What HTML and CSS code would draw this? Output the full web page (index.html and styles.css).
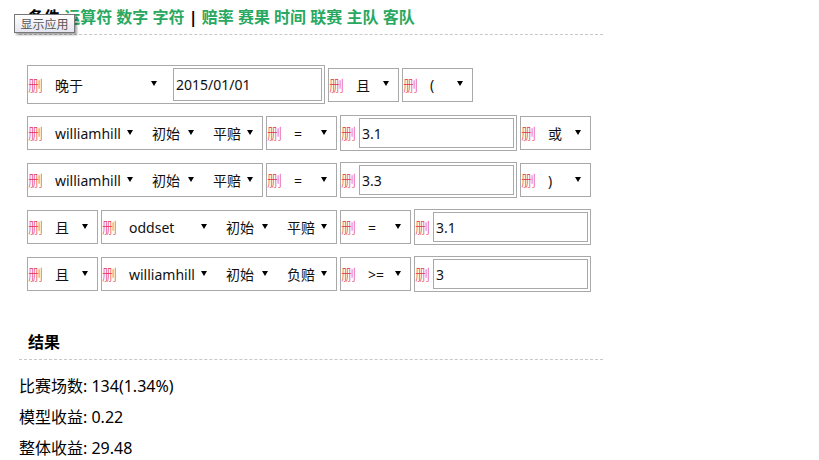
FILE: index.html
```html
<!DOCTYPE html>
<html lang="zh-CN">
<head>
<meta charset="utf-8">
<title>条件</title>
<link rel="stylesheet" href="styles.css">
</head>
<body>
<div class="page">
  <div class="tip">显示应用</div>
  <h3 class="sec-title">条件 <a class="lk">运算符</a> <a class="lk">数字</a> <a class="lk">字符</a> | <a class="lk">赔率</a> <a class="lk">赛果</a> <a class="lk">时间</a> <a class="lk">联赛</a> <a class="lk">主队</a> <a class="lk">客队</a></h3>

  <div class="conds">
    <div class="row">
      <div class="box"><span class="del">删</span><span class="sel w-when"><span class="v">晚于</span><i class="arr"></i></span><input class="in in-date" value="2015/01/01"></div>
      <div class="box"><span class="del">删</span><span class="sel w-op"><span class="v">且</span><i class="arr"></i></span></div>
      <div class="box"><span class="del">删</span><span class="sel w-op"><span class="v">(</span><i class="arr"></i></span></div>
    </div>

    <div class="row">
      <div class="box"><span class="del">删</span><span class="sel w-co"><span class="v">williamhill</span><i class="arr"></i></span><span class="sel w-ty"><span class="v">初始</span><i class="arr"></i></span><span class="sel w-od"><span class="v">平赔</span><i class="arr"></i></span></div>
      <div class="box"><span class="del">删</span><span class="sel w-op"><span class="v">=</span><i class="arr"></i></span></div>
      <div class="box"><span class="del">删</span><input class="in" value="3.1"></div>
      <div class="box"><span class="del">删</span><span class="sel w-op"><span class="v">或</span><i class="arr"></i></span></div>
    </div>

    <div class="row">
      <div class="box"><span class="del">删</span><span class="sel w-co"><span class="v">williamhill</span><i class="arr"></i></span><span class="sel w-ty"><span class="v">初始</span><i class="arr"></i></span><span class="sel w-od"><span class="v">平赔</span><i class="arr"></i></span></div>
      <div class="box"><span class="del">删</span><span class="sel w-op"><span class="v">=</span><i class="arr"></i></span></div>
      <div class="box"><span class="del">删</span><input class="in" value="3.3"></div>
      <div class="box"><span class="del">删</span><span class="sel w-op"><span class="v">)</span><i class="arr"></i></span></div>
    </div>

    <div class="row">
      <div class="box"><span class="del">删</span><span class="sel w-op"><span class="v">且</span><i class="arr"></i></span></div>
      <div class="box"><span class="del">删</span><span class="sel w-co"><span class="v">oddset</span><i class="arr"></i></span><span class="sel w-ty"><span class="v">初始</span><i class="arr"></i></span><span class="sel w-od"><span class="v">平赔</span><i class="arr"></i></span></div>
      <div class="box"><span class="del">删</span><span class="sel w-op"><span class="v">=</span><i class="arr"></i></span></div>
      <div class="box"><span class="del">删</span><input class="in" value="3.1"></div>
    </div>

    <div class="row">
      <div class="box"><span class="del">删</span><span class="sel w-op"><span class="v">且</span><i class="arr"></i></span></div>
      <div class="box"><span class="del">删</span><span class="sel w-co"><span class="v">williamhill</span><i class="arr"></i></span><span class="sel w-ty"><span class="v">初始</span><i class="arr"></i></span><span class="sel w-od"><span class="v">负赔</span><i class="arr"></i></span></div>
      <div class="box"><span class="del">删</span><span class="sel w-op"><span class="v">&gt;=</span><i class="arr"></i></span></div>
      <div class="box"><span class="del">删</span><input class="in" value="3"></div>
    </div>
  </div>

  <h3 class="sec-title res-title">结果</h3>
  <div class="res">
    <p>比赛场数: 134(1.34%)</p>
    <p>模型收益: 0.22</p>
    <p>整体收益: 29.48</p>
  </div>
</div>
</body>
</html>
```

FILE: styles.css
```css
html, body {
  margin: 0;
  padding: 0;
  background: #fff;
}
body {
  font-family: "Noto Sans", "Noto Sans CJK SC", sans-serif;
  color: #000;
}
.page {
  position: relative;
  width: 584px;
  padding: 5px 0 0 19px;
}
.tip {
  position: absolute;
  left: 14px;
  top: 14px;
  width: 61px;
  height: 19px;
  box-sizing: border-box;
  border: 1px solid #767676;
  background: linear-gradient(#ffffff, #e4e5f0);
  box-shadow: 2px 2px 2px rgba(0,0,0,0.35);
  font-size: 12px;
  line-height: 17px;
  color: #575757;
  text-align: center;
  font-family: "Noto Sans CJK SC", sans-serif;
  z-index: 2;
}
.sec-title {
  margin: 0;
  padding: 0 0 5px 9px;
  font-size: 16px;
  line-height: 24px;
  font-weight: bold;
  font-family: "Noto Sans", "Noto Sans CJK SC", sans-serif;
  border-bottom: 1px dashed #c8c8c8;
}
.lk {
  color: #28a860;
  text-decoration: none;
}
.conds {
  display: flex;
  flex-direction: column;
  gap: 11px;
  margin-top: 30px;
  padding-left: 8px;
}
.row {
  display: flex;
  align-items: center;
  gap: 3px;
}
.box {
  display: flex;
  align-items: center;
  border: 1px solid #a9a9a9;
  padding-right: 2px;
}
.del {
  width: 15px;
  font-size: 15px;
  line-height: 20px;
  color: #e6354c;
  font-family: "Noto Sans CJK SC", sans-serif;
  font-weight: 300;
}
.sel {
  display: flex;
  align-items: center;
  justify-content: space-between;
  box-sizing: border-box;
  height: 32px;
  padding: 0 7px 0 12px;
  font-size: 14px;
  color: #111;
}
.arr {
  width: 0;
  height: 0;
  border-left: 3px solid transparent;
  border-right: 3px solid transparent;
  border-top: 5px solid #000;
  margin-top: -2px;
}
.w-when { width: 121px; }
.w-op { width: 52px; }
.w-co { width: 97px; }
.w-ty { width: 61px; }
.w-od { width: 59px; }
.in {
  box-sizing: border-box;
  width: 155px;
  height: 30px;
  margin: 2px 0 2px 3px;
  padding: 0 2px;
  border: 1px solid #a9a9a9;
  font-family: "Noto Sans", "Noto Sans CJK SC", sans-serif;
  font-size: 14px;
  color: #111;
  outline: none;
}
.in-date {
  width: 149px;
  height: 33px;
  margin-left: 9px;
}
.res-title {
  margin-top: 38px;
}
.res {
  padding-top: 11px;
}
.res p {
  margin: 0;
  font-size: 16px;
  line-height: 31px;
}
```
